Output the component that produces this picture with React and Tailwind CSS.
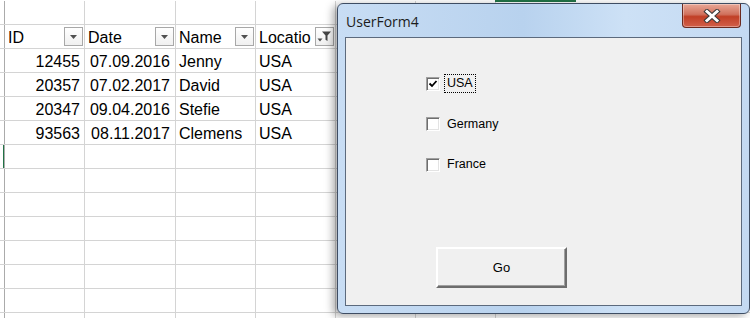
import React from "react";

const Tri = () => (
  <svg width="7" height="4" viewBox="0 0 7 4"><path d="M0 0h7L3.5 4z" fill="#505050" /></svg>
);

function FilterBtn({ active }) {
  return (
    <div className="w-[19px] h-[19px] shrink-0 border border-[#a8a8a8] bg-[linear-gradient(#ffffff,#f0f0f0)] flex items-center justify-center">
      {active ? (
        <svg width="17" height="17" viewBox="0 0 17 17">
          <path d="M6 3.5h9l-3.5 4v5.5l-2-1.3V7.5z" fill="#454545" />
          <path d="M1.5 10.5h5l-2.5 3z" fill="#505050" />
        </svg>
      ) : (
        <Tri />
      )}
    </div>
  );
}

const data = [
  ["12455", "07.09.2016", "Jenny", "USA"],
  ["20357", "07.02.2017", "David", "USA"],
  ["20347", "09.04.2016", "Stefie", "USA"],
  ["93563", "08.11.2017", "Clemens", "USA"],
];

const cellBase = "h-full border-r border-[#d4d4d4] flex items-end overflow-hidden whitespace-nowrap leading-[21px]";

function Row({ idx, children }) {
  return (
    <div className="flex h-[24px] border-b border-[#d4d4d4]">
      <div
        className={
          "w-[5px] h-full shrink-0 border-r border-[#ababab] " +
          (idx === 6 ? "bg-[linear-gradient(90deg,transparent_3px,#217346_3px)]" : "")
        }
      />
      {children}
    </div>
  );
}

function Sheet() {
  const rows = [];
  for (let i = 0; i < 14; i++) {
    let cells;
    if (i === 1) {
      cells = (
        <>
          <div className={cellBase + " w-[80px] items-start justify-between pl-[3px] pr-[1px]"}>
            <span className="leading-[26px]">ID</span>
            <div className="pt-[2px]"><FilterBtn /></div>
          </div>
          <div className={cellBase + " w-[91px] items-start justify-between pl-[3px] pr-[1px]"}>
            <span className="leading-[26px]">Date</span>
            <div className="pt-[2px]"><FilterBtn /></div>
          </div>
          <div className={cellBase + " w-[80px] items-start justify-between pl-[3px] pr-[1px]"}>
            <span className="leading-[26px]">Name</span>
            <div className="pt-[2px]"><FilterBtn /></div>
          </div>
          <div className={cellBase + " w-[80px] items-start pl-[3px] pr-[1px]"}>
            <span className="leading-[26px] flex-1 overflow-hidden">Locatio</span>
            <div className="pt-[2px]"><FilterBtn active /></div>
          </div>
          <div className="flex-1" />
        </>
      );
    } else if (i >= 2 && i <= 5) {
      const d = data[i - 2];
      cells = (
        <>
          <div className={cellBase + " w-[80px] justify-end pr-[4px]"}>{d[0]}</div>
          <div className={cellBase + " w-[91px] justify-end pr-[5px]"}>{d[1]}</div>
          <div className={cellBase + " w-[80px] pl-[3px]"}>{d[2]}</div>
          <div className={cellBase + " w-[80px] pl-[3px]"}>{d[3]}</div>
          <div className="flex-1" />
        </>
      );
    } else {
      cells = (
        <>
          <div className={cellBase + " w-[80px]"} />
          <div className={cellBase + " w-[91px]"} />
          <div className={cellBase + " w-[80px]"} />
          <div className={cellBase + " w-[80px]"} />
          <div className={cellBase + " w-[80px]"} />
          <div className={cellBase + " w-[80px]"} />
          <div className="flex-1" />
        </>
      );
    }
    rows.push(
      <Row key={i} idx={i}>
        {cells}
      </Row>
    );
  }
  return (
    <div className="pt-[1px] text-[16px] text-black" style={{ fontFamily: '"Liberation Sans", Arial, sans-serif' }}>
      {rows}
    </div>
  );
}

function Check({ checked, label, focus }) {
  return (
    <div className="flex items-center h-[19px]">
      <div className="w-[14px] h-[14px] bg-white border border-t-[#a0a0a0] border-l-[#a0a0a0] border-r-white border-b-white shadow-[inset_1px_1px_0_#6e6e6e,inset_-1px_-1px_0_#e3e3e3] flex items-center justify-center">
        {checked && (
          <svg width="10" height="10" viewBox="0 0 10 10">
            <path d="M1.5 4.5l2.5 2.5 4.5-5" fill="none" stroke="#000" strokeWidth="1.8" />
          </svg>
        )}
      </div>
      <div
        className={
          "ml-[4px] h-[19px] flex items-center px-[2px] " +
          (focus ? "border border-dotted border-black" : "border border-transparent")
        }
      >
        {label}
      </div>
    </div>
  );
}

function Dialog() {
  return (
    <div className="absolute left-[337px] top-[3px] w-[413px] h-[311px] rounded-[6px] border border-[#3e4d63] bg-[linear-gradient(90deg,#c8ddf4,#b8d2ee_45%,#cde1f6_70%,#c3d9f2)] shadow-[-4px_2px_8px_rgba(0,0,0,0.35)] flex flex-col px-[7px] pb-[7px]">
      <div className="h-[33px] shrink-0 flex items-start justify-between relative">
        <div
          className="pt-[7px] pl-[1px] text-[14px] text-[#1c1c1c]"
          style={{ fontFamily: '"Open Sans", "Noto Sans", sans-serif' }}
        >
          UserForm4
        </div>
        <div className="mr-[1px] w-[59px] h-[24px] rounded-b-[4px] border border-t-0 border-[#6b2a20] bg-[linear-gradient(#e8a796,#d0715d_45%,#c13f26_55%,#d2604a)] flex items-center justify-center shadow-[inset_0_0_0_1px_rgba(255,255,255,0.35)]">
          <svg width="18" height="14" viewBox="0 0 18 14">
            <path d="M4 2.5l10 9M14 2.5l-10 9" stroke="#3a3a3a" strokeWidth="5" strokeLinecap="square" />
            <path d="M4 2.5l10 9M14 2.5l-10 9" stroke="#ffffff" strokeWidth="3" strokeLinecap="square" />
          </svg>
        </div>
      </div>
      <div
        className="flex-1 bg-[#f0f0f0] border border-[#5c6a7d] pl-[80px] pt-[36px] text-[12.5px] text-black flex flex-col"
        style={{ fontFamily: '"Liberation Sans", Tahoma, sans-serif' }}
      >
        <div className="flex flex-col gap-[21.5px]">
          <Check checked label="USA" focus />
          <Check label="Germany" />
          <Check label="France" />
        </div>
        <button className="mt-[73px] ml-[10px] w-[131px] h-[41px] bg-[#f0f0f0] border-2 border-t-white border-l-white border-r-[#6d6d6d] border-b-[#6d6d6d] shadow-[inset_-1px_-1px_0_#a0a0a0] text-[13px] flex items-center justify-center">
          Go
        </button>
      </div>
    </div>
  );
}

export default function App() {
  return (
    <div className="relative w-[750px] h-[318px] overflow-hidden bg-white">
      <Sheet />
      <div className="absolute left-[495px] top-0 w-[81px] h-[2px] bg-[#217346]" />
      <Dialog />
    </div>
  );
}
